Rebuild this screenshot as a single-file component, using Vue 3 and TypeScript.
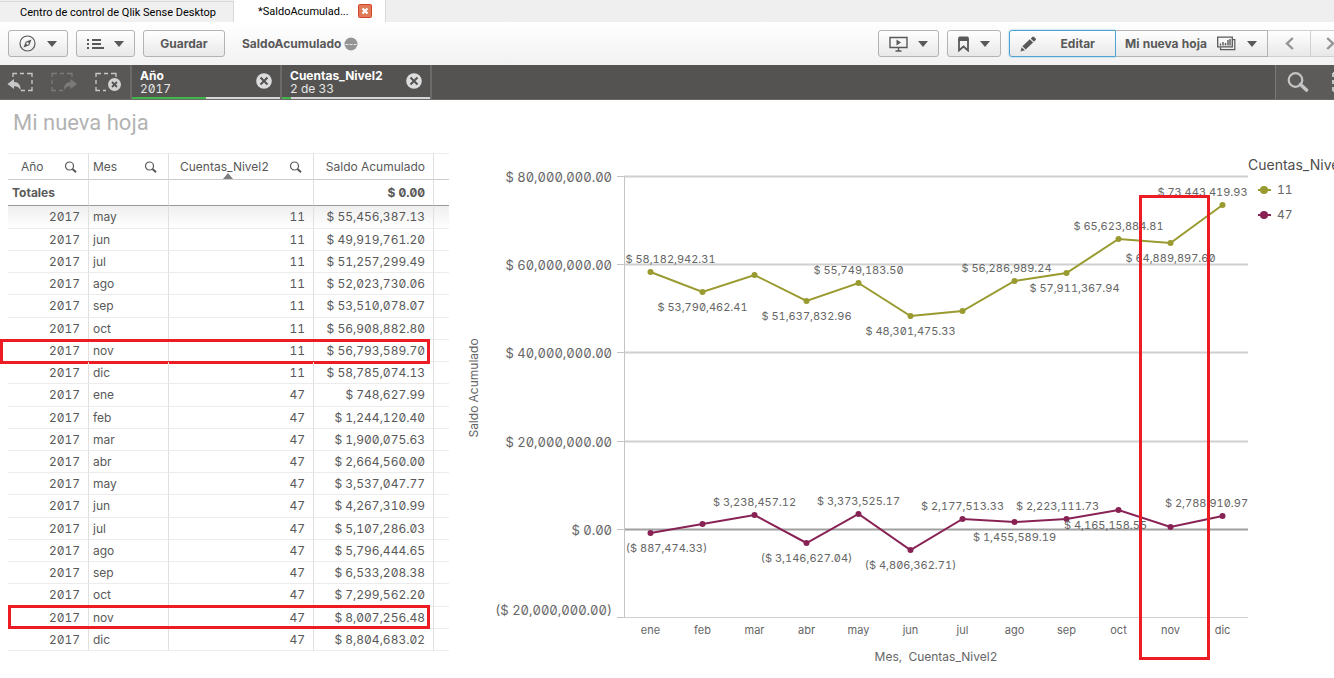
<script setup lang="ts">
interface Row {
  year: string
  month: string
  account: string
  balance: string
  mark?: 'first' | 'second'
}

interface Point {
  value: number
  label?: string
  side?: 'above' | 'below'
  shift?: number
}

interface Series {
  name: string
  color: string
  points: Point[]
}

const months = ['ene', 'feb', 'mar', 'abr', 'may', 'jun', 'jul', 'ago', 'sep', 'oct', 'nov', 'dic']

const balances: [string, string, string][] = [
  ['may', '11', '$ 55,456,387.13'],
  ['jun', '11', '$ 49,919,761.20'],
  ['jul', '11', '$ 51,257,299.49'],
  ['ago', '11', '$ 52,023,730.06'],
  ['sep', '11', '$ 53,510,078.07'],
  ['oct', '11', '$ 56,908,882.80'],
  ['nov', '11', '$ 56,793,589.70'],
  ['dic', '11', '$ 58,785,074.13'],
  ['ene', '47', '$ 748,627.99'],
  ['feb', '47', '$ 1,244,120.40'],
  ['mar', '47', '$ 1,900,075.63'],
  ['abr', '47', '$ 2,664,560.00'],
  ['may', '47', '$ 3,537,047.77'],
  ['jun', '47', '$ 4,267,310.99'],
  ['jul', '47', '$ 5,107,286.03'],
  ['ago', '47', '$ 5,796,444.65'],
  ['sep', '47', '$ 6,533,208.38'],
  ['oct', '47', '$ 7,299,562.20'],
  ['nov', '47', '$ 8,007,256.48'],
  ['dic', '47', '$ 8,804,683.02'],
]

const rows: Row[] = balances.map(([month, account, balance]) => ({
  year: '2017',
  month,
  account,
  balance,
  mark: month === 'nov' ? (account === '11' ? 'first' : 'second') : undefined,
}))

const columns = ['Año', 'Mes', 'Cuentas_Nivel2']

const selections = [
  { field: 'Año', value: '2017', share: 50 },
  { field: 'Cuentas_Nivel2', value: '2 de 33', share: 6 },
]

const series: Series[] = [
  {
    name: '11',
    color: '#999a2f',
    points: [
      { value: 58.18, label: '$ 58,182,942.31', side: 'above', shift: 20 },
      { value: 53.79, label: '$ 53,790,462.41', side: 'below' },
      { value: 57.6 },
      { value: 51.64, label: '$ 51,637,832.96', side: 'below' },
      { value: 55.75, label: '$ 55,749,183.50', side: 'above' },
      { value: 48.3, label: '$ 48,301,475.33', side: 'below' },
      { value: 49.4 },
      { value: 56.29, label: '$ 56,286,989.24', side: 'above', shift: -8 },
      { value: 57.91, label: '$ 57,911,367.94', side: 'below', shift: 8 },
      { value: 65.62, label: '$ 65,623,884.81', side: 'above' },
      { value: 64.89, label: '$ 64,889,897.60', side: 'below' },
      { value: 73.44, label: '$ 73,443,419.93', side: 'above', shift: -20 },
    ],
  },
  {
    name: '47',
    color: '#882255',
    points: [
      { value: -0.89, label: '($ 887,474.33)', side: 'below', shift: 16 },
      { value: 1.1 },
      { value: 3.24, label: '$ 3,238,457.12', side: 'above' },
      { value: -3.15, label: '($ 3,146,627.04)', side: 'below' },
      { value: 3.37, label: '$ 3,373,525.17', side: 'above' },
      { value: -4.81, label: '($ 4,806,362.71)', side: 'below' },
      { value: 2.18, label: '$ 2,177,513.33', side: 'above' },
      { value: 1.46, label: '$ 1,455,589.19', side: 'below' },
      { value: 2.22, label: '$ 2,223,111.73', side: 'above', shift: -9 },
      { value: 4.17, label: '$ 4,165,158.55', side: 'below', shift: -13 },
      { value: 0.5 },
      { value: 2.79, label: '$ 2,788,910.97', side: 'above', shift: -16 },
    ],
  },
]

const plot = { left: 164, right: 788, top: 27, bottom: 468 }

const ticks = [
  { value: 80, label: '$ 80,000,000.00' },
  { value: 60, label: '$ 60,000,000.00' },
  { value: 40, label: '$ 40,000,000.00' },
  { value: 20, label: '$ 20,000,000.00' },
  { value: 0, label: '$ 0.00' },
  { value: -20, label: '($ 20,000,000.00)' },
]

const xAt = (i: number) => plot.left + ((i + 0.5) * (plot.right - plot.left)) / months.length + 0.5
const yAt = (v: number) => Math.round(plot.top + ((80 - v) * (plot.bottom - plot.top)) / 100)
const linePoints = (s: Series) => s.points.map((p, i) => `${xAt(i)},${yAt(p.value) - 1}`).join(' ')
const labelY = (p: Point) => yAt(p.value) + (p.side === 'above' ? -10 : 18)
</script>

<template>
  <div class="app">
    <nav class="tabs">
      <a href="#" class="tab">Centro de control de Qlik Sense Desktop</a>
      <div class="tab tab-active">
        <a href="#">*SaldoAcumulad...</a>
        <button class="tab-close" aria-label="Cerrar">
          <svg width="14" height="14" viewBox="0 0 14 14">
            <rect x="0.5" y="0.5" width="13" height="13" rx="1" fill="#e07b57" stroke="#d4432a" />
            <path d="M4.5 4.5l5 5M9.5 4.5l-5 5" stroke="#fff" stroke-width="2.2" />
          </svg>
        </button>
      </div>
    </nav>

    <header class="toolbar">
      <button class="btn nav-btn" aria-label="Navegación">
        <svg width="17" height="17" viewBox="0 0 17 17">
          <circle cx="8.5" cy="8.5" r="7.5" fill="none" stroke="#595959" stroke-width="1.2" />
          <path d="M12.5 4.5L10.3 10.2 4.5 12.5 6.7 6.8z" fill="#595959" />
          <circle cx="8.5" cy="8.5" r="1.2" fill="#f4f4f4" />
        </svg>
        <i class="caret"></i>
      </button>
      <button class="btn list-btn" aria-label="Menú">
        <svg width="17" height="12" viewBox="0 0 17 12">
          <path d="M0 2h2M0 6h2M0 10h2M5 2h9M5 6h9M5 10h12" stroke="#595959" stroke-width="2" />
        </svg>
        <i class="caret"></i>
      </button>
      <button class="btn save-btn">Guardar</button>
      <span class="app-name">SaldoAcumulado</span>
      <svg class="dots" width="14" height="14" viewBox="0 0 14 14">
        <circle cx="7" cy="7" r="6.5" fill="#949494" />
        <path d="M1.5 7.5h3M5.5 7.5h3M9.5 7.5h3" stroke="#e6e6e6" stroke-width="1" />
      </svg>
      <span class="spacer"></span>
      <button class="btn story-btn" aria-label="Narración">
        <svg width="19" height="16" viewBox="0 0 19 16">
          <path d="M1 1.5h17v10H1z" fill="none" stroke="#595959" stroke-width="1.4" />
          <path d="M7.5 3.5v6l4.5-3z" fill="#595959" />
          <path d="M9.5 12v2.5M6.5 15h6" stroke="#595959" stroke-width="1.4" />
        </svg>
        <i class="caret"></i>
      </button>
      <button class="btn mark-btn" aria-label="Marcadores">
        <svg width="11" height="16" viewBox="0 0 11 16">
          <path d="M1 3v11.5l4.5-4 4.5 4V3" fill="none" stroke="#595959" stroke-width="1.8" />
          <path d="M0.2 5V2q0-1.5 1.5-1.5h7.6q1.5 0 1.5 1.5v3z" fill="#595959" />
        </svg>
        <i class="caret"></i>
      </button>
      <div class="group">
        <button class="btn edit-btn">
          <svg width="17" height="16" viewBox="0 0 17 16">
            <path d="M0.5 15.5l1.2-4.3 3.2 3.1zM2.4 10.2L9.8 3.3l3.3 3.3-7.4 7zM10.7 2.5l1.9-1.7q.7-.6 1.5.2l1.6 1.6q.7.8 0 1.5L13.9 5.8z" fill="#595959" />
          </svg>
          <span>Editar</span>
        </button>
        <button class="btn sheet-btn">
          <span>Mi nueva hoja</span>
          <svg width="19" height="15" viewBox="0 0 19 15">
            <path d="M.7 1.2h14.6v9.6H.7z" fill="none" stroke="#595959" stroke-width="1.3" />
            <path d="M15.5 3.7h2.3v10H3.5v-2.5" fill="none" stroke="#595959" stroke-width="1.2" />
            <path d="M3.5 9.5v-2M6 9.5V6M8.5 9.5V7M11 9.5V4M13 9.5V3" stroke="#595959" stroke-width="1.4" />
          </svg>
          <i class="caret"></i>
        </button>
        <button class="btn step-btn" aria-label="Hoja anterior">
          <svg width="9" height="13" viewBox="0 0 9 13">
            <path d="M7.8 1L2 6.5 7.8 12" fill="none" stroke="#949494" stroke-width="2.4" />
          </svg>
        </button>
        <button class="btn next-btn" aria-label="Hoja siguiente">
          <svg width="9" height="13" viewBox="0 0 9 13">
            <path d="M1.2 1L7 6.5 1.2 12" fill="none" stroke="#949494" stroke-width="2.4" />
          </svg>
        </button>
      </div>
    </header>

    <section class="selections">
      <div class="tools">
        <button aria-label="Paso atrás">
          <svg width="28" height="20" viewBox="0 0 28 20">
            <path d="M6 5V1.5h4M13 1.5h4M20 1.5h5V5M25 8v4M25 15v3.5h-4M18 18.5h-4" fill="none" stroke="#c8c8c8" stroke-width="1.3" />
            <path d="M0.5 12L7 7v3q7 0 6.5 8.5Q12 14 7 14.2V17z" fill="#c8c8c8" />
          </svg>
        </button>
        <button aria-label="Paso adelante" disabled>
          <svg width="28" height="20" viewBox="0 0 28 20">
            <path d="M1 5V1.5h5M9 1.5h4M16 1.5h5V5M1 8v4M1 15v3.5h4M8 18.5h4" fill="none" stroke="#7c7b7a" stroke-width="1.3" />
            <path d="M26 12L19.5 7v3q-7 0-6.5 8.5Q14.5 14 19.5 14.2V17z" fill="#7c7b7a" />
          </svg>
        </button>
        <button aria-label="Borrar selecciones">
          <svg width="28" height="20" viewBox="0 0 28 20">
            <path d="M1 5V1.5h5M9 1.5h4M16 1.5h5V5M1 8v4M1 15v3.5h4M8 18.5h3" fill="none" stroke="#c8c8c8" stroke-width="1.3" />
            <circle cx="19.5" cy="12.5" r="6.5" fill="#d2d2d2" />
            <path d="M17 10l5 5M22 10l-5 5" stroke="#545352" stroke-width="1.8" />
          </svg>
        </button>
      </div>
      <div v-for="s in selections" :key="s.field" class="selection">
        <div class="selection-text">
          <strong>{{ s.field }}</strong>
          <span>{{ s.value }}</span>
        </div>
        <button :aria-label="`Borrar ${s.field}`">
          <svg width="16" height="16" viewBox="0 0 16 16">
            <circle cx="8" cy="8" r="7.8" fill="#dcdcdc" />
            <path d="M4.5 4.5l7 7M11.5 4.5l-7 7" stroke="#545352" stroke-width="2" />
          </svg>
        </button>
        <div class="bar"><div class="bar-fill" :style="{ width: s.share + '%' }"></div></div>
      </div>
      <span class="spacer"></span>
      <div class="search-tools">
        <button aria-label="Buscar">
          <svg width="22" height="20" viewBox="0 0 22 20">
            <circle cx="8.5" cy="8" r="6.8" fill="none" stroke="#c4c4c4" stroke-width="2.2" />
            <path d="M13.5 12.5l6 5.5" stroke="#c4c4c4" stroke-width="3.6" stroke-linecap="round" />
          </svg>
        </button>
        <button aria-label="Selecciones">
          <svg width="20" height="20" viewBox="0 0 20 20">
            <path d="M1 1v4M1 8v4M1 15v4M1 1h5M9 1h5M1 19h5M9 19h5" fill="none" stroke="#c4c4c4" stroke-width="2" />
          </svg>
        </button>
      </div>
    </section>

    <h1>Mi nueva hoja</h1>

    <main>
      <table>
        <colgroup>
          <col class="c-year" />
          <col class="c-month" />
          <col class="c-account" />
          <col class="c-balance" />
          <col />
        </colgroup>
        <thead>
          <tr class="names">
            <th v-for="(c, i) in columns" :key="c" scope="col">
              <div class="head" :class="{ wide: i === 2, first: i === 0 }">
                <span>{{ c }}</span>
                <button :aria-label="`Buscar ${c}`">
                  <svg width="13" height="12" viewBox="0 0 13 12">
                    <circle cx="5.5" cy="5" r="4" fill="none" stroke="#595959" stroke-width="1.2" />
                    <path d="M8.5 8l3.5 3.2" stroke="#595959" stroke-width="2" />
                  </svg>
                </button>
              </div>
              <i v-if="i === 2" class="sort"></i>
            </th>
            <th scope="col" class="num">Saldo Acumulado</th>
            <td></td>
          </tr>
          <tr class="totals">
            <th scope="row">Totales</th>
            <td></td>
            <td></td>
            <td class="num">$ 0.00</td>
            <td></td>
          </tr>
        </thead>
        <tbody>
          <tr v-for="(r, i) in rows" :key="i">
            <td class="num">
              {{ r.year }}
              <span v-if="r.mark" class="mark" :class="r.mark"></span>
            </td>
            <td>{{ r.month }}</td>
            <td class="num">{{ r.account }}</td>
            <td class="num">{{ r.balance }}</td>
            <td></td>
          </tr>
        </tbody>
      </table>

      <svg class="chart" viewBox="0 0 874 528" role="img" aria-label="Saldo Acumulado por Mes y Cuentas_Nivel2">
        <g v-for="t in ticks" :key="t.value">
          <path :d="`M157 ${yAt(t.value) - 0.5}H164`" stroke="#c4c4c4" />
          <path
            :d="`M164 ${yAt(t.value) - 0.5}H788`"
            :stroke="t.value === 0 ? '#a0a0a0' : '#d0d0d0'"
            :stroke-width="t.value === -20 ? 1 : 2"
          />
          <text x="152" :y="t.value === -20 ? yAt(t.value) - 3 : yAt(t.value) + 5" class="tick" text-anchor="end">{{ t.label }}</text>
        </g>
        <path d="M164.5 26V468" stroke="#c4c4c4" />
        <text x="18" y="238" class="title" text-anchor="middle" transform="rotate(-90 18 238)">Saldo Acumulado</text>
        <text x="476" y="511" class="title" text-anchor="middle">Mes,&nbsp; Cuentas_Nivel2</text>
        <text v-for="(m, i) in months" :key="m" :x="xAt(i)" y="484" class="label" text-anchor="middle">{{ m }}</text>

        <g v-for="s in series" :key="s.name">
          <polyline :points="linePoints(s)" fill="none" :stroke="s.color" stroke-width="2" />
          <circle v-for="(p, i) in s.points" :key="i" :cx="xAt(i)" :cy="yAt(p.value) - 1" r="3" :fill="s.color" />
        </g>
        <g v-for="s in series" :key="s.name">
          <template v-for="(p, i) in s.points" :key="i">
            <text v-if="p.label" :x="xAt(i) + (p.shift ?? 0)" :y="labelY(p)" class="label" text-anchor="middle">{{ p.label }}</text>
          </template>
        </g>

        <text x="788" y="20" class="legend-title">Cuentas_Nivel2</text>
        <g v-for="(s, i) in series" :key="s.name">
          <path :d="`M798 ${40 + i * 25}h13`" :stroke="s.color" stroke-width="2" />
          <circle cx="804" :cy="40 + i * 25" r="4" :fill="s.color" />
          <text x="817" :y="44 + i * 25" class="title">{{ s.name }}</text>
        </g>

        <rect x="680.5" y="46.5" width="68" height="462" fill="none" stroke="#ed1c24" stroke-width="3" />
      </svg>
    </main>
  </div>
</template>

<style>
body {
  margin: 0;
  overflow-x: hidden;
  background: #fff;
}
</style>

<style scoped>
.app {
  font-family: Inter, "Liberation Sans", sans-serif;
  font-size: 12px;
  font-variant-numeric: slashed-zero tabular-nums;
  color: #595959;
}
button {
  font: inherit;
  color: inherit;
  padding: 0;
  border: 0;
  background: none;
}
svg {
  display: block;
  flex: none;
}
.spacer {
  flex: 1;
}
.tabs {
  display: flex;
  height: 22px;
  background: #efefef;
  font-family: Roboto, sans-serif;
  font-size: 11px;
}
.tab {
  box-sizing: border-box;
  width: 234px;
  margin-top: 1px;
  padding-left: 20px;
  border-top: 1px solid #d9d9d9;
  border-right: 1px solid #d9d9d9;
  line-height: 22px;
  white-space: nowrap;
  background: #f0f0f0;
}
.tabs a {
  color: #000;
  text-decoration: none;
}
.tab-active {
  display: flex;
  justify-content: space-between;
  width: 152px;
  margin-top: 0;
  padding: 4px 13px 0 24px;
  border-top: 0;
  line-height: 16px;
  background: #fff;
}
.tab-close {
  height: 14px;
}
.toolbar {
  display: flex;
  align-items: center;
  height: 43px;
  padding-left: 8px;
  overflow: hidden;
  background: linear-gradient(#fff, #f2f2f2);
  font-weight: 700;
}
.btn {
  box-sizing: border-box;
  display: flex;
  flex: none;
  align-items: center;
  justify-content: space-between;
  height: 27px;
  margin-right: 8px;
  padding: 0 10px;
  border: 1px solid #b3b3b3;
  border-radius: 3px;
  background: linear-gradient(#fff, #e8e8e8);
}
.caret {
  width: 0;
  border: 5px solid transparent;
  border-top: 6px solid #595959;
  border-bottom: 0;
}
.nav-btn {
  width: 60px;
}
.list-btn {
  width: 59px;
}
.save-btn {
  justify-content: center;
  width: 82px;
}
.app-name {
  margin-left: 9px;
}
.dots {
  margin-left: 3px;
}
.story-btn {
  width: 61px;
}
.mark-btn {
  width: 54px;
}
.group {
  display: flex;
}
.group .btn {
  margin-right: 0;
  border-radius: 0;
}
.group .edit-btn {
  width: 107px;
  padding-right: 20px;
  border-color: #4fa3d1;
  border-radius: 3px 0 0 3px;
  box-shadow: 0 0 2px #6fb8e0;
}
.sheet-btn {
  width: 152px;
  padding-left: 9px;
  border-left: 0;
}
.group .step-btn {
  justify-content: center;
  width: 43px;
  border-left: 0;
  border-color: #d0d0d0;
}
.group .next-btn {
  width: 23px;
  padding: 0 0 0 15px;
  border-left: 0;
  border-right: 0;
  border-color: #d0d0d0;
}
.selections {
  box-sizing: border-box;
  display: flex;
  height: 35px;
  overflow: hidden;
  border-bottom: 1px solid #6b6a69;
  background: #545352;
  color: #fff;
}
.tools {
  box-sizing: border-box;
  display: flex;
  gap: 16px;
  flex: none;
  width: 132px;
  padding-left: 7px;
  border-right: 2px solid #6b6a69;
  background: #595857;
}
.selection {
  display: grid;
  grid-template-columns: 1fr auto;
  grid-template-rows: 1fr 2px;
  flex: none;
  width: 148px;
  border-right: 2px solid #6b6a69;
}
.selection-text {
  display: flex;
  flex-direction: column;
  padding: 4px 0 0 8px;
  line-height: 13px;
}
.selection-text span {
  color: #e6e6e6;
}
.selection button {
  margin-right: 8px;
}
.bar {
  grid-column: 1 / -1;
  background: #d6d6d6;
}
.bar-fill {
  height: 2px;
  background: #3fb54a;
}
.search-tools {
  display: flex;
  gap: 23px;
  flex: none;
  width: 47px;
  padding-left: 11px;
  border-left: 1px solid #7a7978;
  background: #5c5b5a;
}
h1 {
  margin: 0;
  padding: 9px 0 0 13px;
  font-family: Roboto, sans-serif;
  font-size: 22px;
  font-weight: 400;
  line-height: 28px;
  color: #b3b3b3;
}
main {
  display: grid;
  grid-template-columns: 441px 1fr;
  gap: 11px;
  align-items: start;
  padding: 13px 0 0 8px;
}
table {
  width: 100%;
  margin-top: 3px;
  border-spacing: 0;
  table-layout: fixed;
}
.c-year {
  width: 81px;
}
.c-month {
  width: 80px;
}
.c-account {
  width: 145px;
}
.c-balance {
  width: 120px;
}
th,
td {
  box-sizing: border-box;
  height: 22px;
  padding: 0 8px 0 4px;
  border-right: 1px solid #e0e0e0;
  border-bottom: 1px solid #ececec;
  line-height: 16px;
  text-align: left;
  font-weight: 400;
  white-space: nowrap;
}
th:last-child,
td:last-child {
  border-right: 0;
}
.num {
  text-align: right;
}
.names th,
.names td {
  position: relative;
  height: 27px;
  border-top: 1px solid #ececec;
  border-bottom-color: #ccc;
}
.head {
  display: flex;
  align-items: center;
  justify-content: space-between;
  padding-right: 3px;
}
.head.first {
  padding-left: 9px;
}
.head.wide {
  padding-left: 7px;
}
.sort {
  position: absolute;
  left: 54px;
  bottom: 0;
  border: 5px solid transparent;
  border-top: 0;
  border-bottom: 6px solid #808080;
}
.totals th,
.totals td {
  height: 26px;
  border-bottom-color: #999;
  font-weight: 700;
}
tbody tr {
  position: relative;
}
tbody tr:first-child td {
  height: 23px;
  background: linear-gradient(#efefef, #fff);
}
tbody tr:nth-child(9n + 5) td,
tbody tr:nth-child(9n) td {
  height: 23px;
}
.mark {
  position: absolute;
  border: 3px solid #ed1c24;
}
.mark.first {
  inset: -1px 19px -2px -8px;
}
.mark.second {
  inset: -2px 19px 0 0;
}
.chart {
  width: 100%;
  height: auto;
}
.chart text {
  fill: #666;
}
.chart .tick {
  font-size: 13px;
}
.chart .title {
  font-size: 12px;
}
.chart .label {
  font-size: 11px;
}
.chart .legend-title {
  font-size: 14px;
  fill: #4d4d4d;
}
</style>
